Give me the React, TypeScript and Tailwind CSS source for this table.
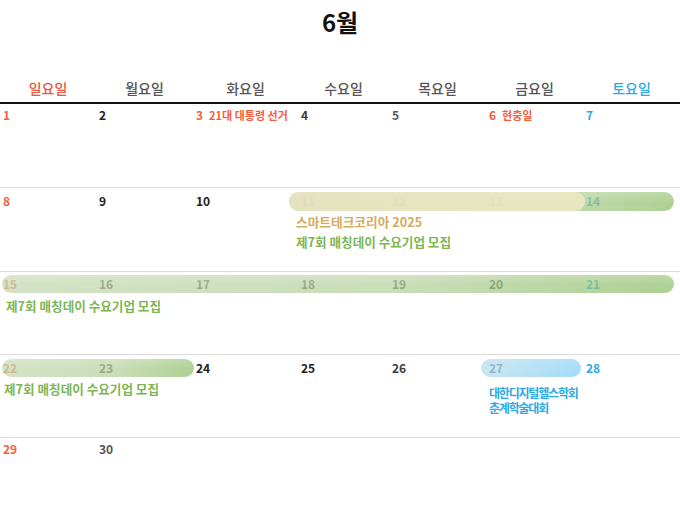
import React from "react";

const COLS = "grid grid-cols-[96px_97px_105px_91px_97px_97px_97px]";
const FONT = { fontFamily: '"Noto Sans CJK KR", "Noto Sans", sans-serif' };

type Cell = {
  d?: number;
  color?: string;
  inline?: string;
  events?: React.ReactNode;
};

const RED = "text-[#f4603f]";
const BLUE = "text-[#2ba9e6]";
const GRAY = "text-[#3d3d3d]";

function DateCell({ c, pt }: { c: Cell; pt: string }) {
  return (
    <div className={`pl-[3px] ${pt} relative`}>
      {c.d !== undefined && (
        <div className="flex items-center h-[14px] whitespace-nowrap">
          <span className={`text-[12px] font-semibold leading-[14px] ${c.color ?? GRAY}`}>{c.d}</span>
          {c.inline && (
            <span className={`ml-[6px] text-[11px] font-bold leading-[14px] ${RED}`}>{c.inline}</span>
          )}
        </div>
      )}
      {c.events}
    </div>
  );
}

const greenBar =
  "absolute rounded-full bg-[linear-gradient(180deg,rgba(255,255,255,0.18),rgba(255,255,255,0)_60%),linear-gradient(90deg,rgba(195,215,175,0.72),rgba(180,208,155,0.72)_60%,rgba(142,191,105,0.72))]";

export default function App() {
  const match = (
    <div className="text-[12.6px] font-bold leading-[20px] whitespace-nowrap text-[#7db553]">
      제7회 매칭데이 수요기업 모집
    </div>
  );
  return (
    <div className="w-[680px] h-[512px] bg-white overflow-hidden" style={FONT}>
      <div className="h-[74px] pt-[6px] text-center text-[24px] font-bold leading-[32px] text-[#111]">6월</div>
      <div className={`${COLS} h-[28px] items-center text-[14px] font-medium`}>
        <div className="text-center text-[#e9553d]">일요일</div>
        <div className="text-center text-[#555]">월요일</div>
        <div className="text-center text-[#555]">화요일</div>
        <div className="text-center text-[#555]">수요일</div>
        <div className="text-center text-[#555]">목요일</div>
        <div className="text-center text-[#555]">금요일</div>
        <div className="text-center text-[#2ba9e6]">토요일</div>
      </div>
      <div className="h-[2px] bg-[#111]" />

      {/* Row 1 */}
      <div className={`${COLS} h-[84px] border-b border-[#dcdcdc] relative`}>
        <DateCell pt="pt-[4px]" c={{ d: 1, color: RED }} />
        <DateCell pt="pt-[4px]" c={{ d: 2, color: "text-[#222]" }} />
        <DateCell pt="pt-[4px]" c={{ d: 3, color: RED, inline: "21대 대통령 선거" }} />
        <DateCell pt="pt-[4px]" c={{ d: 4 }} />
        <DateCell pt="pt-[4px]" c={{ d: 5, color: "text-[#555]" }} />
        <DateCell pt="pt-[4px]" c={{ d: 6, color: RED, inline: "현충일" }} />
        <DateCell pt="pt-[4px]" c={{ d: 7, color: BLUE }} />
      </div>

      {/* Row 2 */}
      <div className={`${COLS} h-[84px] border-b border-[#dcdcdc] relative`}>
        <DateCell pt="pt-[6px]" c={{ d: 8, color: RED }} />
        <DateCell pt="pt-[6px]" c={{ d: 9, color: "text-[#222]" }} />
        <DateCell pt="pt-[6px]" c={{ d: 10, color: "text-[#222]" }} />
        <DateCell
          pt="pt-[6px]"
          c={{
            d: 11,
            events: (
              <div className="mt-[4px] ml-[-5px]">
                <div className="text-[12.7px] font-bold leading-[20px] whitespace-nowrap text-[#d5ab5c]">
                  스마트테크코리아 2025
                </div>
                {match}
              </div>
            ),
          }}
        />
        <DateCell pt="pt-[6px]" c={{ d: 12 }} />
        <DateCell pt="pt-[6px]" c={{ d: 13 }} />
        <DateCell pt="pt-[6px]" c={{ d: 14, color: BLUE }} />
        <div className={`${greenBar} left-[289px] w-[385px] top-[4px] h-[19px]`} />
        <div className="absolute rounded-full left-[289px] w-[296px] top-[4px] h-[19px] bg-[linear-gradient(90deg,rgba(232,226,192,0.88),rgba(236,232,196,0.9))]" />
      </div>

      {/* Row 3 */}
      <div className={`${COLS} h-[83px] border-b border-[#dcdcdc] relative`}>
        <DateCell
          pt="pt-[5px]"
          c={{ d: 15, color: RED, events: <div className="mt-[5px] ml-[3px]">{match}</div> }}
        />
        <DateCell pt="pt-[5px]" c={{ d: 16 }} />
        <DateCell pt="pt-[5px]" c={{ d: 17 }} />
        <DateCell pt="pt-[5px]" c={{ d: 18 }} />
        <DateCell pt="pt-[5px]" c={{ d: 19 }} />
        <DateCell pt="pt-[5px]" c={{ d: 20 }} />
        <DateCell pt="pt-[5px]" c={{ d: 21, color: BLUE }} />
        <div className={`${greenBar} left-[2px] w-[672px] top-[3px] h-[18px]`} />
      </div>

      {/* Row 4 */}
      <div className={`${COLS} h-[83px] border-b border-[#dcdcdc] relative`}>
        <DateCell
          pt="pt-[6px]"
          c={{ d: 22, color: RED, events: <div className="mt-[4px] ml-[1px]">{match}</div> }}
        />
        <DateCell pt="pt-[6px]" c={{ d: 23 }} />
        <DateCell pt="pt-[6px]" c={{ d: 24, color: "text-[#222]" }} />
        <DateCell pt="pt-[6px]" c={{ d: 25, color: "text-[#222]" }} />
        <DateCell pt="pt-[6px]" c={{ d: 26 }} />
        <DateCell
          pt="pt-[6px]"
          c={{
            d: 27,
            events: (
              <div className="mt-[11px] text-[12px] font-bold leading-[14.5px] tracking-[-1.2px] whitespace-nowrap text-[#2ba9e6]">
                <div>대한디지털헬스학회</div>
                <div>춘계학술대회</div>
              </div>
            ),
          }}
        />
        <DateCell pt="pt-[6px]" c={{ d: 28, color: BLUE }} />
        <div className={`${greenBar} left-[2px] w-[192px] top-[4px] h-[18px]`} />
        <div className="absolute rounded-full left-[481px] w-[100px] top-[4px] h-[18px] bg-[linear-gradient(180deg,rgba(255,255,255,0.15),rgba(255,255,255,0)),linear-gradient(90deg,rgba(178,218,238,0.72),rgba(126,205,244,0.72))]" />
      </div>

      {/* Row 5 */}
      <div className={`${COLS} h-[74px] relative`}>
        <DateCell pt="pt-[4px]" c={{ d: 29, color: RED }} />
        <DateCell pt="pt-[4px]" c={{ d: 30, color: "text-[#555]" }} />
        <div />
        <div />
        <div />
        <div />
        <div />
      </div>
    </div>
  );
}
